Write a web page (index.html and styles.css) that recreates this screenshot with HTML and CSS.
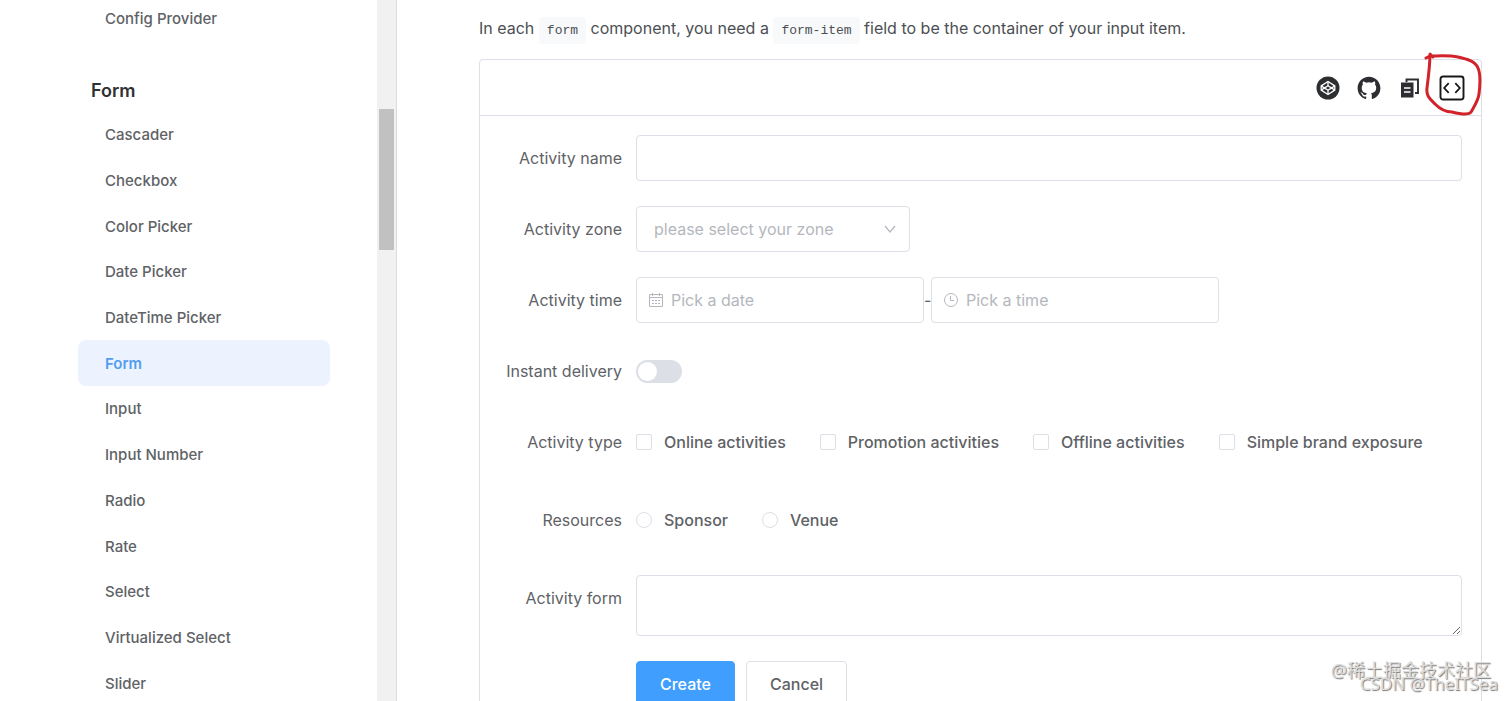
FILE: index.html
```html
<!DOCTYPE html>
<html lang="en">
<head>
    <meta charset="UTF-8">
    <meta name="viewport" content="width=device-width, initial-scale=1.0">
    <title>Form</title>
    <link rel="stylesheet" href="styles.css">
</head>
<body>
    <div class="layout">
        <aside class="sidebar">
            <nav class="menu">
                <a href="#" class="menu-item">Config Provider</a>
                <h2 class="menu-title">Form</h2>
                <div class="menu-list">
                    <a href="#" class="menu-item">Cascader</a>
                    <a href="#" class="menu-item">Checkbox</a>
                    <a href="#" class="menu-item">Color Picker</a>
                    <a href="#" class="menu-item">Date Picker</a>
                    <a href="#" class="menu-item">DateTime Picker</a>
                    <a href="#" class="menu-item active">Form</a>
                    <a href="#" class="menu-item">Input</a>
                    <a href="#" class="menu-item">Input Number</a>
                    <a href="#" class="menu-item">Radio</a>
                    <a href="#" class="menu-item">Rate</a>
                    <a href="#" class="menu-item">Select</a>
                    <a href="#" class="menu-item">Virtualized Select</a>
                    <a href="#" class="menu-item">Slider</a>
                </div>
            </nav>
            <div class="scrollbar"><div class="thumb"></div></div>
        </aside>

        <main class="content">
            <p class="intro">In each <code>form</code> component, you need a <code>form-item</code> field to be the container of your input item.</p>

            <section class="demo">
                <div class="demo-header">
                    <button class="tool" type="button" aria-label="Edit in CodePen">
                        <svg width="24" height="24" viewBox="0 0 24 24">
                            <circle cx="12" cy="12" r="11.5" fill="#2c2e31"/>
                            <g fill="none" stroke="#fff" stroke-width="1.3" stroke-linejoin="round">
                                <path d="M12 5.5l6.8 4.4v4.2L12 18.5l-6.8-4.4V9.9z"/>
                                <path d="M5.2 9.9L12 14.3l6.8-4.4M5.2 14.1L12 9.7l6.8 4.4M12 5.5v4.2M12 14.3v4.2"/>
                            </g>
                        </svg>
                    </button>
                    <button class="tool" type="button" aria-label="Edit on GitHub">
                        <svg width="24" height="24" viewBox="0 0 24 24">
                            <path fill="#2c2e31" d="M12 .8C5.7.8.6 5.9.6 12.2c0 5 3.3 9.3 7.8 10.8.6.1.8-.2.8-.5v-2c-3.2.7-3.900-1.500-3.900-1.500-.5-1.300-1.300-1.700-1.300-1.700-1-.7.1-.7.1-.7 1.200.1 1.800 1.200 1.800 1.200 1 1.800 2.700 1.300 3.300 1 .1-.7.4-1.300.7-1.500-2.500-.3-5.200-1.300-5.200-5.700 0-1.200.4-2.300 1.200-3.100-.1-.3-.5-1.400.1-3 0 0 1-.3 3.100 1.200a11 11 0 0 1 5.700 0c2.200-1.500 3.100-1.200 3.100-1.200.6 1.600.2 2.700.1 3 .7.8 1.200 1.800 1.200 3.100 0 4.400-2.700 5.300-5.200 5.600.4.4.8 1 .8 2.100v3.200c0 .3.2.7.8.5 4.500-1.500 7.800-5.700 7.800-10.800C23.400 5.900 18.300.8 12 .8z"/>
                        </svg>
                    </button>
                    <button class="tool" type="button" aria-label="Copy code">
                        <svg width="24" height="24" viewBox="0 0 24 24">
                            <path d="M8.500 6V3.500h11.500v13.500H17" fill="none" stroke="#2c2e31" stroke-width="1.9"/>
                            <path d="M3 6.500h12.500V21.500H3z" fill="#2c2e31"/>
                            <path d="M6 12h6.500M6 16h6.500" stroke="#fff" stroke-width="1.7"/>
                        </svg>
                    </button>
                    <button class="tool marked" type="button" aria-label="View source">
                        <svg width="26" height="26" viewBox="0 0 26 26" fill="none" stroke="#17181a">
                            <rect x="1.5" y="1.5" width="23" height="23" rx="2.5" stroke-width="1.9"/>
                            <path d="M9.700 8.200L5.200 13l4.500 4.800M16.300 8.200l4.500 4.800-4.500 4.800" stroke-width="1.8"/>
                        </svg>
                        <svg class="mark" width="64" height="72" viewBox="0 0 64 72" fill="none" stroke="#d2222a" stroke-width="3" stroke-linecap="round" stroke-linejoin="round">
                            <path d="M5 13l4-2c8 0 19-1 28 1 9 2 17 4 20 11 3 7 2 18 1 26-1 7-4 11-8 18-2 3-11 2-19 0-8 0-13-4-17-8-5-5-9-8-8-16 1-8 3-23 3-34l3 3"/>
                        </svg>
                    </button>
                </div>

                <form class="form">
                    <div class="form-item">
                        <label class="label" for="name">Activity name</label>
                        <input class="input" type="text" id="name">
                    </div>
                    <div class="form-item">
                        <label class="label" for="zone">Activity zone</label>
                        <div class="select-box">
                            <select class="input" id="zone">
                                <option value="">please select your zone</option>
                            </select>
                            <svg class="arrow" width="14" height="14" viewBox="0 0 14 14">
                                <path d="M2 4l5 6 5-6" fill="none" stroke="#b4b7bd" stroke-width="1.2"/>
                            </svg>
                        </div>
                    </div>
                    <div class="form-item">
                        <label class="label" for="date">Activity time</label>
                        <div class="picker input">
                            <svg width="16" height="16" viewBox="0 0 16 16" fill="none" stroke="#b4b7bd">
                                <path d="M1.500 2.500h13v12h-13zM1.500 5.500h13M4.500 1v3M11.500 1v3"/>
                                <path d="M4 8.500h2M7 8.500h2M10 8.500h2M4 11.500h2M7 11.500h2M10 11.500h2"/>
                            </svg>
                            <input type="text" id="date" placeholder="Pick a date">
                        </div>
                        <span class="dash">-</span>
                        <div class="picker input">
                            <svg width="16" height="16" viewBox="0 0 16 16" fill="none" stroke="#b4b7bd">
                                <circle cx="8" cy="8" r="6.5"/>
                                <path d="M7.500 4v4.500H11"/>
                            </svg>
                            <input type="text" aria-label="Pick a time" placeholder="Pick a time">
                        </div>
                    </div>
                    <div class="form-item">
                        <label class="label" for="delivery">Instant delivery</label>
                        <input class="switch" type="checkbox" role="switch" id="delivery">
                    </div>
                    <div class="form-item choices">
                        <span class="label">Activity type</span>
                        <label class="choice"><input type="checkbox" name="type">Online activities</label>
                        <label class="choice"><input type="checkbox" name="type">Promotion activities</label>
                        <label class="choice"><input type="checkbox" name="type">Offline activities</label>
                        <label class="choice"><input type="checkbox" name="type">Simple brand exposure</label>
                    </div>
                    <div class="form-item choices">
                        <span class="label">Resources</span>
                        <label class="choice"><input type="radio" name="resource">Sponsor</label>
                        <label class="choice"><input type="radio" name="resource">Venue</label>
                    </div>
                    <div class="form-item">
                        <label class="label" for="desc">Activity form</label>
                        <textarea class="input textarea" id="desc"></textarea>
                    </div>
                    <div class="form-item">
                        <span class="label"></span>
                        <button class="btn primary" type="button">Create</button>
                        <button class="btn" type="button">Cancel</button>
                    </div>
                </form>
            </section>
        </main>
    </div>

    <div class="watermark">
        <div class="site">@稀土掘金技术社区</div>
        <div class="author">CSDN @TheITSea</div>
    </div>
</body>
</html>
```
FILE: styles.css
```css
* {
    box-sizing: border-box;
}

body {
    margin: 0;
    font-family: Inter, sans-serif;
    font-size: 16px;
    color: #606266;
    background: #fff;
}

button, input, select, textarea {
    font: inherit;
    color: inherit;
}

.layout {
    display: flex;
    height: 100vh;
    overflow: hidden;
}

/* sidebar */
.sidebar {
    display: flex;
    flex: 0 0 397px;
    border-right: 1px solid #dcdcdc;
    overflow: hidden;
}

.menu {
    flex: 1;
    margin-top: -5px;
    padding: 0 47px 0 78px;
}

.menu-item {
    display: flex;
    align-items: center;
    height: 46px;
    padding-left: 27px;
    border-radius: 8px;
    font-size: 15px;
    font-weight: 500;
    color: #606266;
    text-decoration: none;
}

.menu-title {
    margin: 38px 0 9px 13px;
    font-size: 18px;
    font-weight: 600;
    line-height: 24px;
    color: #303133;
}

.menu-list {
    display: grid;
    grid-auto-rows: 1fr;
    height: 594px;
}

.menu-list .menu-item {
    height: auto;
}

.menu-item.active {
    background: #ecf3ff;
    color: #539df0;
    font-weight: 600;
}

.scrollbar {
    width: 19px;
    padding: 109px 2px 0;
    background: #f1f1f1;
}

.thumb {
    height: 141px;
    background: #c1c1c1;
}

/* content */
.content {
    flex: 1;
    min-width: 0;
    padding: 14px 30px 0 82px;
}

.intro {
    margin: 0 0 17px;
    line-height: 28px;
    height: 28px;
    color: #4c4f53;
}

.intro code {
    padding: 6px 8px;
    border-radius: 4px;
    background: #f8f9fb;
    font-family: "Liberation Mono", monospace;
    font-size: 13px;
}

.demo {
    border: 1px solid #dcdfe6;
    border-radius: 4px;
}

.demo-header {
    display: flex;
    justify-content: flex-end;
    align-items: center;
    gap: 17px;
    height: 56px;
    padding-right: 16px;
    border-bottom: 1px solid #dcdfe6;
}

.tool {
    display: flex;
    padding: 0;
    border: none;
    background: none;
    cursor: pointer;
}

.marked {
    position: relative;
}

/* hand-drawn ring round the source button */
.mark {
    position: absolute;
    top: -30px;
    left: -18px;
}

.form {
    padding: 19px;
}

.form-item {
    display: flex;
    align-items: center;
    min-height: 46px;
    margin-bottom: 25px;
}

.form-item.choices {
    margin-bottom: 32px;
}

.label {
    flex: 0 0 123px;
    align-self: flex-start;
    margin-right: 14px;
    line-height: 46px;
    text-align: right;
}

.input {
    width: 100%;
    height: 46px;
    border: 1px solid #dcdfe6;
    border-radius: 4px;
    background: #fff;
    outline: none;
}

.select-box {
    position: relative;
    width: 274px;
}

.select-box select {
    padding: 0 17px;
    appearance: none;
    color: #b4b7bd;
}

.arrow {
    position: absolute;
    top: 16px;
    right: 13px;
    pointer-events: none;
}

.picker {
    display: flex;
    align-items: center;
    gap: 7px;
    width: 288px;
    padding: 0 11px;
}

.picker input {
    flex: 1;
    min-width: 0;
    padding: 0;
    border: none;
    outline: none;
}

.picker input::placeholder {
    color: #b4b7bd;
}

.dash {
    width: 7px;
    text-align: center;
}

.switch {
    appearance: none;
    width: 46px;
    height: 23px;
    margin: 0;
    padding: 2px;
    border-radius: 12px;
    background: #dcdfe6;
}

.switch::before {
    content: "";
    display: block;
    width: 19px;
    height: 19px;
    border-radius: 50%;
    background: #fff;
}

.choice {
    display: flex;
    align-items: center;
    gap: 12px;
    margin-right: 34px;
    font-weight: 500;
}

.choice input {
    appearance: none;
    width: 16px;
    height: 16px;
    margin: 0;
    border: 1px solid #dcdfe6;
    border-radius: 2px;
}

.choice input[type="radio"] {
    border-radius: 50%;
}

.textarea {
    height: 61px;
    resize: vertical;
}

.btn {
    height: 46px;
    margin-right: 11px;
    padding: 0 23px;
    border: 1px solid #dcdfe6;
    border-radius: 4px;
    background: #fff;
    font-weight: 500;
    cursor: pointer;
}

.btn.primary {
    border-color: #409eff;
    background: #409eff;
    color: #fff;
}

.watermark {
    position: absolute;
    right: 14px;
    bottom: 10px;
    font-family: "Noto Sans", "Noto Sans CJK SC", sans-serif;
    font-size: 18px;
    line-height: 14px;
    text-align: right;
    color: #ddd;
    text-shadow: 1px 1px 1px #777;
}

.site {
    padding-right: 7px;
}

.author {
    font-size: 17px;
}
```
